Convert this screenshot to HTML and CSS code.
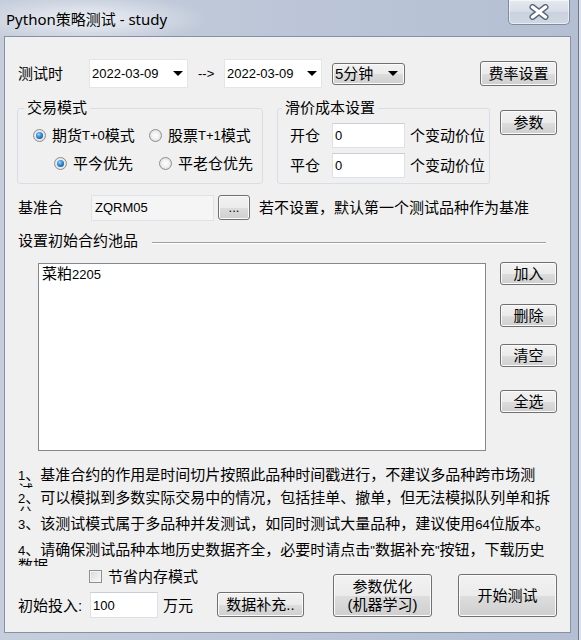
FILE: index.html
```html
<!DOCTYPE html>
<html lang="zh-CN">
<head>
    <meta charset="UTF-8">
    <meta name="viewport" content="width=device-width, initial-scale=1.0">
    <title>Python策略测试 - study</title>
    <link rel="stylesheet" href="styles.css">
</head>
<body>
    <div class="window">
        <div class="titlebar">
            <span class="title">Python策略测试 - study</span>
            <button class="close-btn" title="关闭">
                <svg width="20" height="16" viewBox="0 0 20 16">
                    <path d="M3.5 3 L16.5 13 M16.5 3 L3.5 13" stroke="#5b667b" stroke-width="6" stroke-linecap="round"/>
                    <path d="M3.5 3 L16.5 13 M16.5 3 L3.5 13" stroke="#ffffff" stroke-width="3.4" stroke-linecap="round"/>
                </svg>
            </button>
        </div>

        <div class="client">
            <!-- test period -->
            <div class="row period-row">
                <span class="period-label">测试时</span>
                <div class="date-box date-from"><span>2022-03-09</span><i class="arrow"></i></div>
                <span class="to-sign">--&gt;</span>
                <div class="date-box date-to"><span>2022-03-09</span><i class="arrow"></i></div>
                <div class="combo"><span>5分钟</span><i class="arrow"></i></div>
                <button class="btn fee-btn">费率设置</button>
            </div>

            <!-- trade mode / slippage -->
            <div class="row mode-row">
                <fieldset class="group trade-group">
                    <legend>交易模式</legend>
                    <div class="radio-line first">
                        <label class="radio-item w-116"><span class="radio checked"></span>期货<span class="lat">T+0</span>模式</label>
                        <label class="radio-item"><span class="radio"></span>股票<span class="lat">T+1</span>模式</label>
                    </div>
                    <div class="radio-line second">
                        <label class="radio-item w-105"><span class="radio checked"></span>平今优先</label>
                        <label class="radio-item"><span class="radio"></span>平老仓优先</label>
                    </div>
                </fieldset>
                <fieldset class="group slip-group">
                    <legend>滑价成本设置</legend>
                    <div class="slip-line first">
                        <span class="slip-label">开仓</span>
                        <div class="text-box">0</div>
                        <span class="unit">个变动价位</span>
                    </div>
                    <div class="slip-line">
                        <span class="slip-label">平仓</span>
                        <div class="text-box">0</div>
                        <span class="unit">个变动价位</span>
                    </div>
                </fieldset>
                <button class="btn param-btn">参数</button>
            </div>

            <!-- base contract -->
            <div class="row base-row">
                <span class="base-label">基准合</span>
                <div class="base-box">ZQRM05</div>
                <button class="btn dots-btn">...</button>
                <span class="base-hint">若不设置，默认第一个测试品种作为基准</span>
            </div>

            <div class="row pool-row">
                <span class="pool-label">设置初始合约池品</span>
                <div class="sep"></div>
            </div>

            <div class="pool-area">
                <div class="pool-list">
                    <div class="pool-item">菜粕<span class="lat">2205</span></div>
                </div>
                <div class="side-btns">
                    <button class="btn side-btn">加入</button>
                    <button class="btn side-btn del-btn">删除</button>
                    <button class="btn side-btn clr-btn">清空</button>
                    <button class="btn side-btn all-btn">全选</button>
                </div>
            </div>

            <!-- notes -->
            <div class="notes">
                <div class="note note-1"><span class="lat">1</span>、基准合约的作用是时间切片按照此品种时间戳进行，不建议多品种跨市场测试</div>
                <div class="note note-2"><span class="lat">2</span>、可以模拟到多数实际交易中的情况，包括挂单、撤单，但无法模拟队列单和拆分</div>
                <div class="note note-3"><span class="lat">3</span>、该测试模式属于多品种并发测试，如同时测试大量品种，建议使用<span class="lat">64</span>位版本。</div>
                <div class="note note-4"><span class="lat">4</span>、请确保测试品种本地历史数据齐全，必要时请点击<span class="lat">"</span>数据补充<span class="lat">"</span>按钮，下载历史数据</div>
            </div>

            <div class="bottom-row">
                <div class="bottom-left">
                    <label class="check-line"><span class="checkbox"></span>节省内存模式</label>
                    <div class="invest-line">
                        <span class="invest-label">初始投入:</span>
                        <div class="text-box invest-box">100</div>
                        <span class="wan">万元</span>
                    </div>
                </div>
                <button class="btn data-btn">数据补充..</button>
                <button class="btn ml-btn">参数优化<br>(机器学习)</button>
                <button class="btn start-btn">开始测试</button>
            </div>
        </div>
    </div>
</body>
</html>
```

FILE: styles.css
```css
* {
    box-sizing: border-box;
}

body {
    margin: 0;
    background: #dfe3e9;
    font-family: "Liberation Sans", "Noto Sans CJK SC", sans-serif;
    font-size: 15px;
    color: #000;
    overflow: hidden;
}

.window {
    width: 579px;
    height: 640px;
    background: linear-gradient(to right, #c6cedc, #bbc5d7 55%, #b4bfd3);
    border-right: 1px solid #6e7a8f;
    display: flex;
    flex-direction: column;
}

.titlebar {
    height: 36px;
    display: flex;
    align-items: flex-start;
    background: radial-gradient(ellipse 120px 24px at 88px 19px, rgba(255, 255, 255, 0.7), rgba(255, 255, 255, 0));
}

.title {
    font-family: "Noto Sans", "Noto Sans CJK SC", sans-serif;
    font-size: 15px;
    line-height: 20px;
    margin: 9px 0 0 6px;
}

.close-btn {
    margin-left: auto;
    margin-right: 8px;
    width: 62px;
    height: 25px;
    padding: 0;
    border: 1px solid #7f8ba1;
    border-top: none;
    border-radius: 0 0 5px 5px;
    background: linear-gradient(#e6eaf0, #d6dce6 50%, #c9d1de 51%, #d0d7e2);
    box-shadow: inset 0 0 0 1px rgba(255, 255, 255, 0.55);
    display: flex;
    align-items: center;
    justify-content: center;
}

.client {
    margin-left: 4px;
    width: 567px;
    height: 597px;
    border: 1px solid #8591a5;
    background: #f0f0f0;
    display: flex;
    flex-direction: column;
}

.lat {
    font-size: 13px;
}

.row {
    display: flex;
    align-items: center;
}

/* buttons */
.btn {
    font-family: inherit;
    font-size: 15px;
    line-height: 17px;
    color: #000;
    padding: 0;
    border: 1px solid #707070;
    border-radius: 3px;
    background: linear-gradient(#f2f2f2, #ebebeb 50%, #dddddd 51%, #cfcfcf);
    box-shadow: inset 0 0 0 1px #fbfbfb;
}

.arrow {
    width: 0;
    height: 0;
    border-left: 5px solid transparent;
    border-right: 5px solid transparent;
    border-top: 5px solid #000;
}

/* period row */
.period-row {
    margin-top: 22px;
    height: 29px;
}

.period-label {
    margin-left: 13px;
    width: 71px;
    line-height: 17px;
}

.date-box {
    width: 99px;
    height: 29px;
    background: #fff;
    border: 1px solid #e2e5ea;
    display: flex;
    align-items: center;
    justify-content: space-between;
    padding: 0 4px 0 2px;
    font-size: 13px;
}

.date-to {
    width: 98px;
}

.to-sign {
    margin-left: 10px;
    width: 26px;
    font-size: 13px;
}

.combo {
    margin-left: 10px;
    width: 73px;
    height: 22px;
    border: 1px solid #707070;
    border-radius: 3px;
    background: linear-gradient(#f2f2f2, #ebebeb 50%, #dddddd 51%, #cfcfcf);
    box-shadow: inset 0 0 0 1px #fbfbfb;
    display: flex;
    align-items: center;
    justify-content: space-between;
    padding: 0 6px 0 2px;
    line-height: 17px;
}

.fee-btn {
    margin-left: 75px;
    width: 77px;
    height: 25px;
}

/* group boxes */
.mode-row {
    margin-top: 11px;
    align-items: flex-start;
}

.group {
    margin: 0;
    padding: 0;
    height: 85px;
    border: 1px solid #d5dfe5;
    border-radius: 3px;
}

.group legend {
    line-height: 18px;
    padding: 0 3px;
    margin-left: 6px;
}

.trade-group {
    margin-left: 12px;
    width: 246px;
}

.slip-group {
    margin-left: 14px;
    width: 213px;
}

.slip-group legend {
    margin-left: 4px;
}

.param-btn {
    margin-left: 10px;
    margin-top: 11px;
    width: 57px;
    height: 25px;
}

.radio-line {
    display: flex;
    align-items: center;
    height: 28px;
}

.radio-line.first {
    margin-top: 4px;
    padding-left: 15px;
}

.radio-line.second {
    padding-left: 36px;
}

.radio-item {
    display: flex;
    align-items: center;
    line-height: 17px;
}

.w-116 {
    width: 116px;
}

.w-105 {
    width: 105px;
}

.radio {
    width: 13px;
    height: 13px;
    margin-right: 6px;
    border-radius: 50%;
    border: 1px solid #8e8f8f;
    background: radial-gradient(circle, #ffffff 0, #f1f1f1 45%, #cdcdcd 100%);
    display: flex;
    align-items: center;
    justify-content: center;
}

.radio.checked::after {
    content: "";
    width: 7px;
    height: 7px;
    border-radius: 50%;
    background: radial-gradient(circle at 40% 35%, #9bd6ff 0, #2f86d6 45%, #0c3c77 100%);
}

.slip-line {
    display: flex;
    align-items: center;
    height: 25px;
    margin-top: 5px;
}

.slip-line.first {
    margin-top: 6px;
}

.slip-label {
    margin-left: 12px;
    width: 42px;
    line-height: 17px;
}

.text-box {
    width: 73px;
    height: 25px;
    background: #fff;
    border: 1px solid #dde1e7;
    border-top-color: #c9ced6;
    padding-left: 2px;
    display: flex;
    align-items: center;
    font-size: 13px;
}

.unit {
    margin-left: 5px;
    line-height: 17px;
}

/* base contract */
.base-row {
    margin-top: 10px;
    height: 27px;
}

.base-label {
    margin-left: 13px;
    width: 73px;
    line-height: 17px;
}

.base-box {
    width: 123px;
    height: 26px;
    background: #f5f5f5;
    border: 1px solid #dfe2e7;
    padding-left: 3px;
    display: flex;
    align-items: center;
    font-size: 13px;
}

.dots-btn {
    margin-left: 4px;
    width: 32px;
    height: 25px;
    font-size: 13px;
}

.base-hint {
    margin-left: 9px;
    line-height: 17px;
}

.pool-row {
    margin-top: 11px;
    height: 17px;
}

.pool-label {
    margin-left: 13px;
    line-height: 17px;
}

.sep {
    margin-left: 14px;
    margin-top: 5px;
    width: 394px;
    border-top: 1px solid #a0a0a0;
    border-bottom: 1px solid #ffffff;
}

/* contract pool */
.pool-area {
    display: flex;
    align-items: flex-start;
    margin-top: 14px;
}

.pool-list {
    margin-left: 33px;
    width: 448px;
    height: 188px;
    background: #fff;
    border: 1px solid #828790;
    padding: 1px 3px;
    line-height: 17px;
}

.side-btns {
    margin-left: 14px;
    margin-top: -1px;
    display: flex;
    flex-direction: column;
}

.side-btn {
    width: 57px;
    height: 23px;
}

.del-btn {
    margin-top: 19px;
}

.clr-btn {
    margin-top: 17px;
}

.all-btn {
    margin-top: 23px;
}

/* notes */
.notes {
    margin-top: 16px;
    margin-left: 13px;
}

.note {
    line-height: 15px;
    overflow: hidden;
}

.note-1 {
    width: 525px;
    height: 21px;
}

.note-2 {
    width: 540px;
    height: 21px;
    margin-top: 2px;
}

.note-3 {
    width: 540px;
    height: 20px;
    margin-top: 5px;
}

.note-4 {
    width: 540px;
    height: 24px;
    margin-top: 6px;
}

/* bottom */
.bottom-row {
    display: flex;
    align-items: flex-end;
}

.bottom-left {
    margin-left: 13px;
    width: 199px;
}

.check-line {
    height: 20px;
    display: flex;
    align-items: center;
    padding-left: 71px;
    line-height: 17px;
}

.checkbox {
    width: 13px;
    height: 13px;
    margin-right: 6px;
    border: 1px solid #8e8f8f;
    background: linear-gradient(135deg, #d8d8d8, #fbfbfb);
    box-shadow: inset 0 0 0 1px #f4f4f4;
}

.invest-line {
    margin-top: 6px;
    height: 26px;
    display: flex;
    align-items: center;
}

.invest-label {
    width: 72px;
    line-height: 17px;
}

.invest-box {
    width: 68px;
    height: 26px;
}

.wan {
    margin-left: 5px;
    line-height: 17px;
}

.data-btn {
    width: 87px;
    height: 25px;
    margin-bottom: 1px;
}

.ml-btn {
    margin-left: 29px;
    width: 99px;
    height: 43px;
    margin-bottom: 1px;
    line-height: 18px;
}

.start-btn {
    margin-left: 26px;
    width: 99px;
    height: 43px;
    margin-bottom: 1px;
}
```
